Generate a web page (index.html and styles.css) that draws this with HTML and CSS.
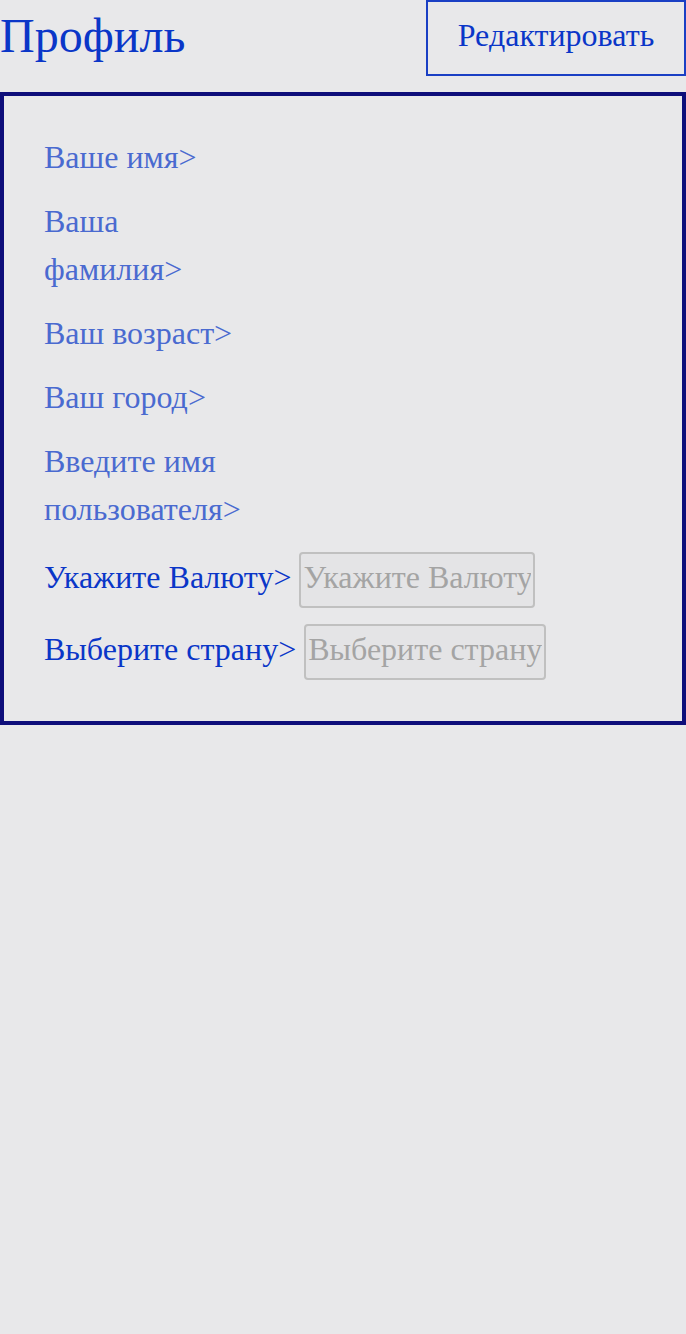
FILE: index.html
```html
<!DOCTYPE html>
<html lang="ru">
<head>
<meta charset="utf-8">
<link rel="stylesheet" href="styles.css">
</head>
<body>
<header class="header">
  <h1 class="title">Профиль</h1>
  <button class="edit-btn">Редактировать</button>
</header>
<section class="card">
  <div class="field"><span class="label">Ваше имя&gt;</span></div>
  <div class="field"><span class="label">Ваша фамилия&gt;</span></div>
  <div class="field"><span class="label">Ваш возраст&gt;</span></div>
  <div class="field"><span class="label">Ваш город&gt;</span></div>
  <div class="field"><span class="label">Введите имя пользователя&gt;</span></div>
  <div class="input-group">
    <div class="field field-input"><span class="label label-strong">Укажите Валюту&gt;</span><input class="input" placeholder="Укажите Валюту" disabled></div>
    <div class="field field-input"><span class="label label-strong">Выберите страну&gt;</span><input class="input input-wide" placeholder="Выберите страну" disabled></div>
  </div>
</section>
</body>
</html>
```
FILE: styles.css
```css
html, body {
  margin: 0;
  padding: 0;
  background: #e8e8ea;
  font-family: "Liberation Serif", "Times New Roman", serif;
}
.header {
  display: flex;
  justify-content: space-between;
  align-items: flex-start;
  height: 76px;
  margin-bottom: 16px;
}
.title {
  margin: 0;
  font-size: 48px;
  font-weight: normal;
  line-height: 72px;
  color: #0a36c8;
}
.edit-btn {
  width: 260px;
  height: 76px;
  border: 2px solid #1a3fc4;
  background: transparent;
  font-family: inherit;
  font-size: 32px;
  color: #0a36c8;
  padding: 0 0 6px;
}
.card {
  border: 4px solid #0e0e7a;
  padding: 37px 40px 41px;
  display: flex;
  flex-direction: column;
  gap: 16px;
}
.input-group {
  display: flex;
  flex-direction: column;
  gap: 16px;
  margin-top: 3px;
}
.field {
  display: flex;
  align-items: center;
}
.label {
  font-size: 32px;
  line-height: 48px;
  color: #4a6ad0;
  max-width: 200px;
}
.label-strong {
  color: #0a36c8;
  max-width: none;
  padding-top: 1px;
}
.field-input {
  gap: 8px;
  align-items: flex-start;
}
.input {
  height: 56px;
  box-sizing: border-box;
  width: 236px;
  border: 2px solid #c0c0c0;
  border-radius: 4px;
  background: #e4e4e6;
  font-family: inherit;
  font-size: 32px;
  padding: 0 2px 6px;
}
.input-wide { width: 242px; }
.input::placeholder { color: #a4a4a4; }
```
